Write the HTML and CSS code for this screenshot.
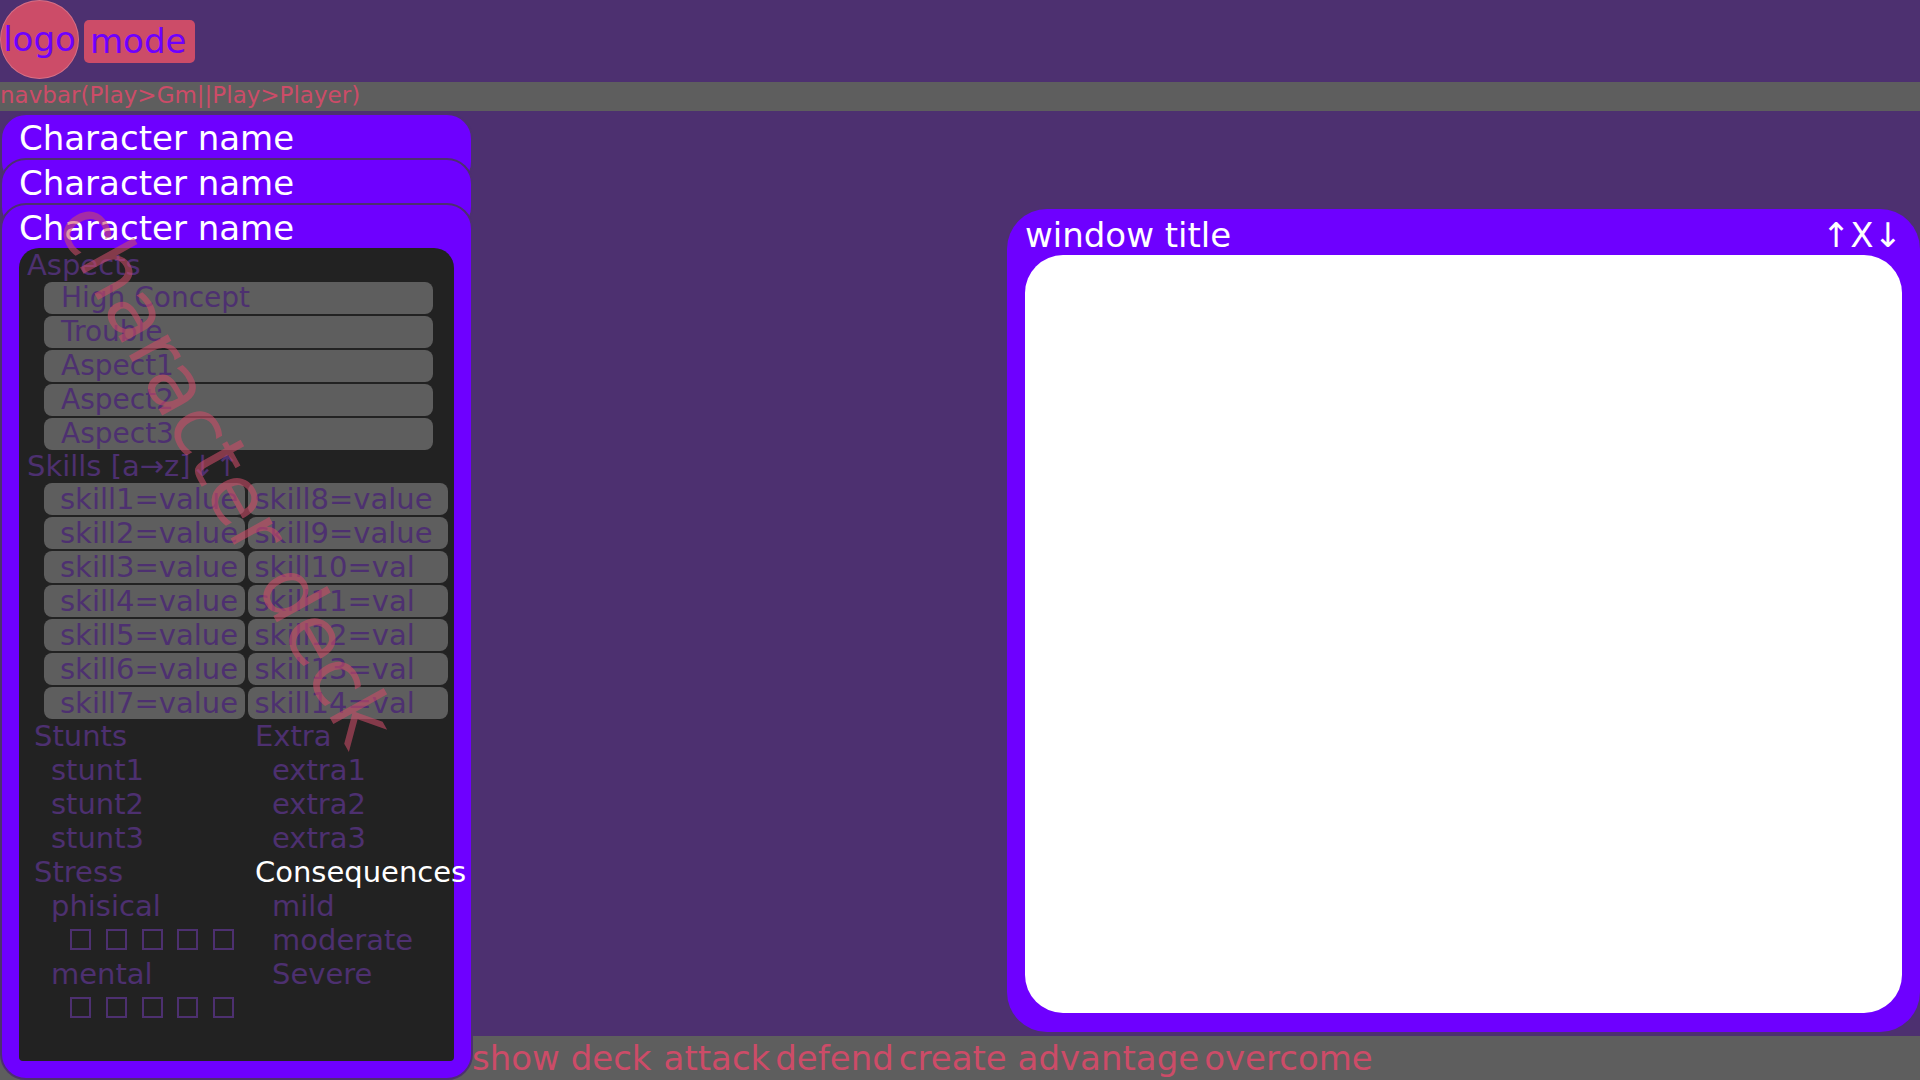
FILE: index.html
```html
<!DOCTYPE html>
<html lang="en">
<head>
  <meta charset="utf-8">
  <meta name="viewport" content="width=device-width, initial-scale=1">
  <title>Character deck</title>
  <link rel="stylesheet" href="styles.css">
</head>
<body>
  <div class="app">
    <header class="topbar">
      <a class="logo" href="#">logo</a>
      <button class="mode" type="button">mode</button>
    </header>

    <nav class="navbar"><a href="#">navbar(Play&gt;Gm||Play&gt;Player)</a></nav>

    <main class="stage">
      <section class="window">
        <div class="window-bar">
          <h2 class="window-title">window title</h2>
          <div class="window-controls">
            <button type="button">↑</button><button type="button">X</button><button type="button">↓</button>
          </div>
        </div>
        <div class="window-body"></div>
      </section>
    </main>

    <footer class="actions">
      <button type="button">show deck</button>
      <div class="action-group">
        <button type="button">attack</button>
        <button type="button">defend</button>
        <button type="button">create advantage</button>
        <button type="button">overcome</button>
      </div>
    </footer>

    <aside class="deck">
      <article class="card"><h2 class="card-name">Character name</h2></article>
      <article class="card"><h2 class="card-name">Character name</h2></article>
      <article class="card card-open">
        <h2 class="card-name">Character name</h2>
        <div class="sheet">
          <h3 class="sheet-heading">Aspects</h3>
          <ul class="aspects">
            <li>High Concept</li>
            <li>Trouble</li>
            <li>Aspect1</li>
            <li>Aspect2</li>
            <li>Aspect3</li>
          </ul>
          <h3 class="sheet-heading skills-heading">Skills [a→z]↓↑</h3>
          <div class="skills">
            <ul class="skill-list">
              <li>skill1=value</li>
              <li>skill2=value</li>
              <li>skill3=value</li>
              <li>skill4=value</li>
              <li>skill5=value</li>
              <li>skill6=value</li>
              <li>skill7=value</li>
            </ul>
            <ul class="skill-list skill-list-end">
              <li>skill8=value</li>
              <li>skill9=value</li>
              <li>skill10=val</li>
              <li>skill11=val</li>
              <li>skill12=val</li>
              <li>skill13=val</li>
              <li>skill14=val</li>
            </ul>
          </div>
          <div class="details">
            <div class="details-column">
              <h3>Stunts</h3>
              <ul>
                <li>stunt1</li>
                <li>stunt2</li>
                <li>stunt3</li>
              </ul>
              <h3>Stress</h3>
              <fieldset class="stress">
                <legend>phisical</legend>
                <div class="boxes">
                  <input type="checkbox" aria-label="phisical 1">
                  <input type="checkbox" aria-label="phisical 2">
                  <input type="checkbox" aria-label="phisical 3">
                  <input type="checkbox" aria-label="phisical 4">
                  <input type="checkbox" aria-label="phisical 5">
                </div>
              </fieldset>
              <fieldset class="stress">
                <legend>mental</legend>
                <div class="boxes">
                  <input type="checkbox" aria-label="mental 1">
                  <input type="checkbox" aria-label="mental 2">
                  <input type="checkbox" aria-label="mental 3">
                  <input type="checkbox" aria-label="mental 4">
                  <input type="checkbox" aria-label="mental 5">
                </div>
              </fieldset>
            </div>
            <div class="details-column">
              <h3>Extra</h3>
              <ul>
                <li>extra1</li>
                <li>extra2</li>
                <li>extra3</li>
              </ul>
              <h3 class="consequences">Consequences</h3>
              <ul>
                <li>mild</li>
                <li>moderate</li>
                <li>Severe</li>
              </ul>
            </div>
          </div>
        </div>
      </article>
      <span class="deck-label">character deck</span>
    </aside>
  </div>
</body>
</html>
```

FILE: styles.css
```css
:root {
  --plum: #4d3070;
  --violet: #6e00ff;
  --rose: #cc4c68;
  --grey: #5e5e5e;
  --ink: #222222;
}

* {
  box-sizing: border-box;
}

body {
  margin: 0;
  background: var(--plum);
  color: var(--plum);
  font-family: "DejaVu Sans", sans-serif;
  font-size: 29px;
  line-height: 34px;
}

h2,
h3,
ul,
fieldset {
  margin: 0;
  padding: 0;
  border: 0;
  font-size: inherit;
  font-weight: normal;
  list-style: none;
}

button {
  padding: 0;
  border: 0;
  background: none;
  color: inherit;
  font: inherit;
  cursor: pointer;
}

a {
  color: inherit;
  text-decoration: none;
}

.app {
  display: grid;
  grid-template-columns: 473px 1fr;
  grid-template-rows: auto auto 1fr auto;
  min-height: 100vh;
}

/* Top */

.topbar {
  grid-column: 1 / -1;
  display: flex;
  align-items: center;
  gap: 5px;
  padding-bottom: 3px;
  color: var(--violet);
  font-size: 34px;
}

.logo {
  width: 79px;
  border-radius: 50%;
  background: var(--rose);
  box-shadow: inset 0 0 0 1px rgba(255, 255, 255, 0.2);
  line-height: 79px;
  text-align: center;
}

.mode {
  margin-top: 3px;
  padding: 0 9px 0 6px;
  border-radius: 5px;
  background: var(--rose);
  line-height: 43px;
}

.navbar {
  grid-column: 1 / -1;
  padding-bottom: 2px;
  background: var(--grey);
  color: var(--rose);
  font-size: 23px;
  line-height: 27px;
}

.navbar a {
  display: block;
}

/* Floating window */

.stage {
  grid-column: 2;
  grid-row: 3;
  display: flex;
  justify-content: flex-end;
  padding: 98px 0 4px;
}

.window {
  display: flex;
  flex-direction: column;
  width: 63.1%;
  padding: 6px 18px 19px;
  border-radius: 40px;
  background: var(--violet);
}

.window-bar {
  display: flex;
  justify-content: space-between;
  color: #ffffff;
  font-size: 34px;
  line-height: 40px;
}

.window-controls {
  display: flex;
}

.window-body {
  flex: 1;
  border-radius: 38px;
  background: #ffffff;
}

/* Bottom actions */

.actions {
  grid-column: 1 / -1;
  grid-row: 4;
  display: flex;
  gap: 12px;
  padding-left: 472px;
  background: var(--grey);
  color: var(--rose);
  font-size: 34px;
  line-height: 44px;
}

.action-group {
  display: flex;
  gap: 5px;
}

/* Deck of character cards */

.deck {
  grid-column: 1;
  grid-row: 3 / 5;
  position: relative;
  display: flex;
  flex-direction: column;
  padding-top: 2px;
}

.card {
  height: 75px;
  margin-bottom: -30px;
  padding: 3px 17px 17px;
  border: 2px solid var(--plum);
  border-radius: 26px;
  background: var(--violet);
}

.card-open {
  flex: 1;
  display: flex;
  flex-direction: column;
  height: auto;
  margin-bottom: 0;
}

.card-name {
  color: #ffffff;
  font-size: 34px;
  line-height: 40px;
}

.sheet {
  flex: 1;
  border-radius: 20px 20px 4px 4px;
  background: var(--ink);
}

.sheet-heading {
  padding-left: 8px;
}

.skills-heading {
  line-height: 33px;
}

.aspects,
.skill-list {
  display: grid;
  gap: 2px;
  line-height: 32px;
}

.aspects {
  margin: 0 21px 0 25px;
  font-size: 28px;
}

.aspects li,
.skill-list li {
  padding-left: 17px;
  border-radius: 8px;
  background: var(--grey);
}

.skills {
  display: grid;
  grid-template-columns: 1fr 1fr;
  gap: 3px;
  margin: 0 6px 0 25px;
}

.skill-list li {
  padding-left: 16px;
}

.skill-list-end li {
  padding-left: 7px;
}

.details {
  display: grid;
  grid-template-columns: 221px 1fr;
  padding-left: 15px;
}

.details-column ul,
.stress {
  padding-left: 17px;
}

.consequences {
  color: #ffffff;
}

.stress legend {
  padding: 0;
}

.boxes {
  display: flex;
  align-items: center;
  justify-content: space-between;
  width: 183px;
  height: 34px;
  padding: 0 0 2px 19px;
}

.boxes input {
  appearance: none;
  width: 21px;
  height: 21px;
  margin: 0;
  border: 2px solid var(--plum);
}

/* Diagonal label laid over the cards */

.deck-label {
  position: absolute;
  top: 36px;
  left: 55px;
  color: var(--rose);
  font-size: 81px;
  line-height: 94px;
  white-space: nowrap;
  opacity: 0.58;
  transform: rotate(61deg);
  transform-origin: 0 75px;
  pointer-events: none;
}
```
